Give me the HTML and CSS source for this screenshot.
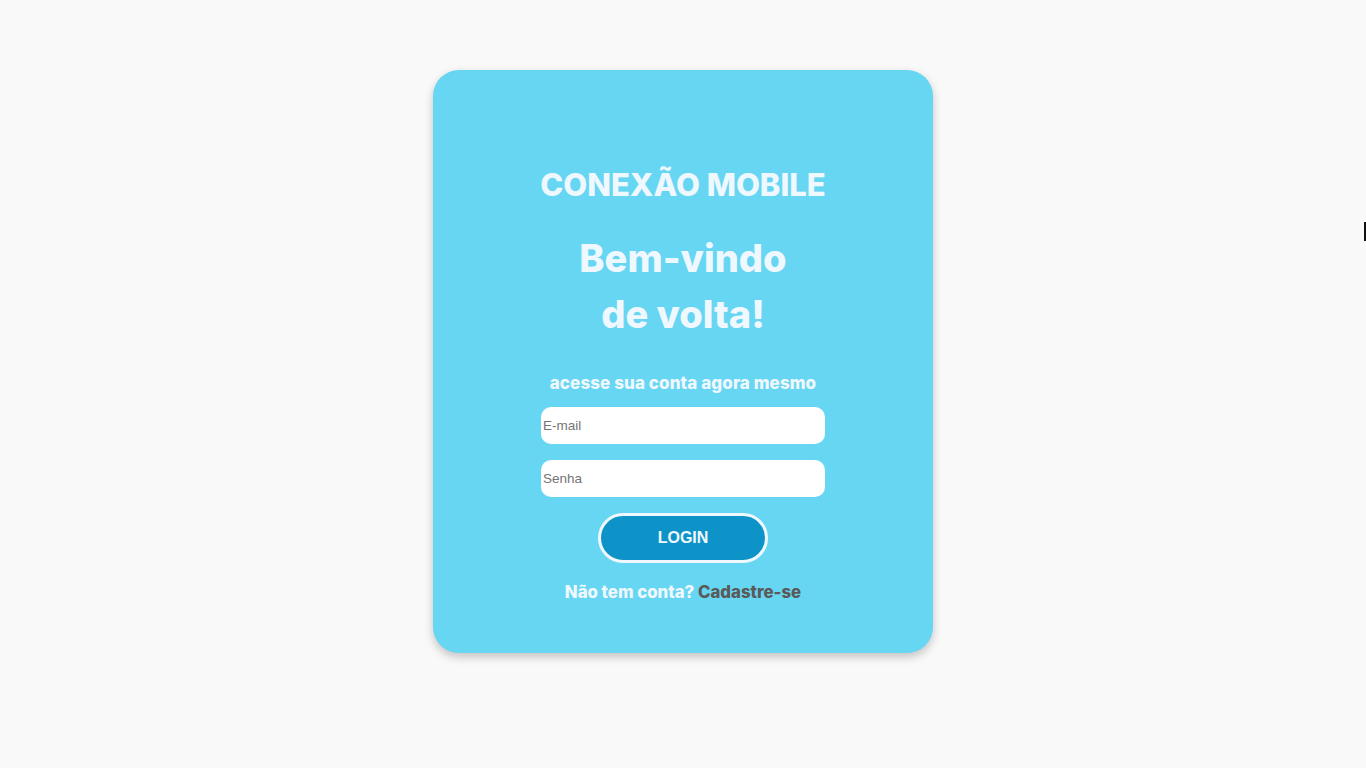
FILE: index.html
```html
<!DOCTYPE html>
<html lang="pt-BR">
<head>
<meta charset="utf-8">
<title>Conexão Mobile - Login</title>
<link rel="stylesheet" href="styles.css">
</head>
<body>
<main class="page">
  <section class="card">
    <h1 class="brand">CONEXÃO MOBILE</h1>
    <h2 class="welcome">Bem-vindo<br>de volta!</h2>
    <p class="subtitle">acesse sua conta agora mesmo</p>
    <form class="form">
      <input class="field" type="email" placeholder="E-mail">
      <input class="field" type="password" placeholder="Senha">
      <button class="btn" type="button">LOGIN</button>
    </form>
    <p class="signup">Não tem conta? <a class="signup-link" href="#">Cadastre-se</a></p>
  </section>
  <span class="caret"></span>
</main>
</body>
</html>
```
FILE: styles.css
```css
* { box-sizing: border-box; }
html, body { margin: 0; padding: 0; }
body {
  background: #f9f9f9;
  font-family: Inter, "Noto Sans", sans-serif;
  height: 768px;
  overflow: hidden;
}
.page {
  display: flex;
  flex-direction: column;
  align-items: center;
  padding-top: 70px;
  position: relative;
  height: 768px;
}
.card {
  width: 500px;
  height: 583px;
  background: #67d6f2;
  border-radius: 26px;
  box-shadow: 0 4px 10px rgba(0,0,0,0.22);
  display: flex;
  flex-direction: column;
  align-items: center;
  padding-top: 95px;
  color: #f0f8ff;
}
.brand {
  margin: 0;
  font-size: 31px;
  line-height: 40px;
  font-weight: 800;
  letter-spacing: 0;
}
.welcome {
  margin: 25px 0 0;
  font-size: 38px;
  line-height: 56px;
  font-weight: 800;
  text-align: center;
}
.subtitle {
  margin: 29px 0 0;
  font-size: 17px;
  line-height: 24px;
  font-weight: 800;
  letter-spacing: 0.1px;
}
.form {
  display: flex;
  flex-direction: column;
  align-items: center;
  margin-top: 12px;
}
.field {
  width: 284px;
  height: 37px;
  border: none;
  border-radius: 10px;
  background: #fff;
  padding: 0 2px;
  font-family: "Liberation Sans", Arial, sans-serif;
  font-size: 13.5px;
  color: #333;
  outline: none;
}
.field::placeholder { color: #757575; }
.field + .field { margin-top: 16px; }
.btn {
  margin-top: 16px;
  width: 170px;
  height: 50px;
  border: 3px solid #f0f8ff;
  border-radius: 25px;
  background: #0e93c8;
  color: #f0f8ff;
  font-family: "Liberation Sans", Arial, sans-serif;
  font-size: 16px;
  font-weight: 700;
}
.signup {
  margin: 17px 0 0;
  font-size: 16.8px;
  line-height: 24px;
  font-weight: 800;
}
.signup-link {
  color: #5a5a5a;
  text-decoration: none;
}
.caret {
  position: absolute;
  left: 1364px;
  top: 222px;
  width: 2px;
  height: 19px;
  background: #111;
}
```
